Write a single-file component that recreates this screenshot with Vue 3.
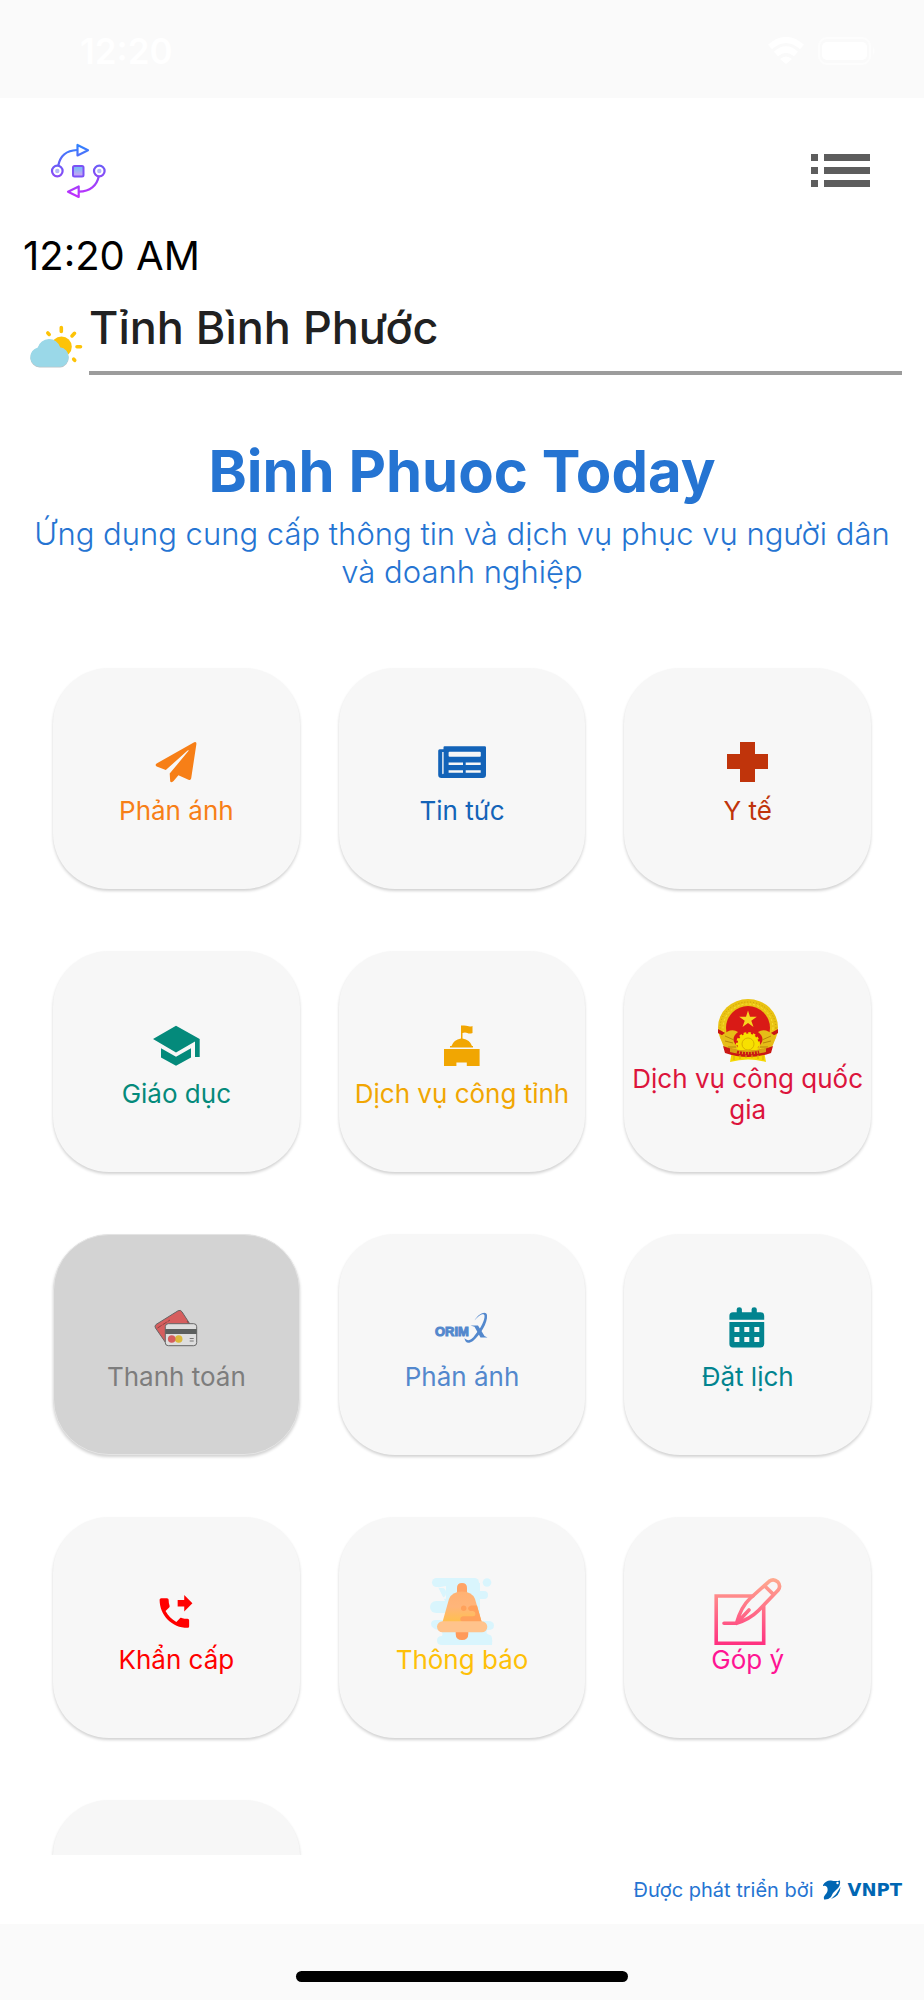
<script setup>
import { ref } from 'vue'

const province = ref('Tỉnh Bình Phước')

const services = [
  { icon: 'plane', label: 'Phản ánh', tone: 'orange' },
  { icon: 'news', label: 'Tin tức', tone: 'blue' },
  { icon: 'cross', label: 'Y tế', tone: 'rust' },
  { icon: 'school', label: 'Giáo dục', tone: 'green' },
  { icon: 'office', label: 'Dịch vụ công tỉnh', tone: 'amber' },
  { icon: 'emblem', label: 'Dịch vụ công quốc gia', tone: 'crimson' },
  { icon: 'cards', label: 'Thanh toán', tone: 'muted', disabled: true },
  { icon: 'orimx', label: 'Phản ánh', tone: 'sky' },
  { icon: 'calendar', label: 'Đặt lịch', tone: 'teal' },
  { icon: 'phone', label: 'Khẩn cấp', tone: 'red' },
  { icon: 'bell', label: 'Thông báo', tone: 'yellow' },
  { icon: 'pencil', label: 'Góp ý', tone: 'pink' },
  { icon: '', label: '', tone: 'muted' }
]
</script>

<template>
  <div class="page">
    <div class="status">
      <span class="clock">12:20</span>
      <div class="signals">
        <svg class="wifi" viewBox="0 0 36 28" aria-hidden="true">
          <path d="M2 10Q18 -4 34 10" fill="none" stroke="#fff" stroke-width="6" />
          <path d="M8 17Q18 8 28 17" fill="none" stroke="#fff" stroke-width="6" />
          <path d="M12 22Q18 17 24 22L18 27Z" fill="#fff" />
        </svg>
        <svg class="battery" viewBox="0 0 58 28" aria-hidden="true">
          <rect x="1" y="1" width="51" height="26" rx="8" fill="none" stroke="#fdfdfd" stroke-width="2" />
          <rect x="4" y="5" width="45" height="18" rx="5" fill="#fff" />
          <path d="M55 10q3 4 0 8z" fill="#fdfdfd" />
        </svg>
      </div>
    </div>

    <main class="screen">
      <header class="top">
        <svg class="logo" viewBox="0 0 56 56" aria-hidden="true">
          <defs>
            <linearGradient id="lg" gradientUnits="userSpaceOnUse" x1="0" y1="0" x2="0" y2="56">
              <stop offset="0" stop-color="#2b86ff" />
              <stop offset=".5" stop-color="#7b52f5" />
              <stop offset="1" stop-color="#c92bff" />
            </linearGradient>
            <linearGradient id="lq" x1="0" y1="0" x2="0" y2="1">
              <stop offset="0" stop-color="#6dc0f5" />
              <stop offset="1" stop-color="#d3a0f5" />
            </linearGradient>
          </defs>
          <g fill="none" stroke="url(#lg)" stroke-width="2.200" stroke-linejoin="round">
            <path d="M8.3 22.5C10 13.500 16 7.500 27 7" />
            <path d="M27.500 2v10.500L38 7.300z" />
            <path d="M48.700 33.500C47 42.500 40 48.500 29 48.700" />
            <path d="M28.700 43.500v10.500L18 48.700z" />
            <circle cx="7.300" cy="28" r="5.300" />
            <circle cx="49.300" cy="28" r="5.300" />
          </g>
          <rect x="23" y="23" width="10.500" height="10.500" rx="1.500" fill="url(#lq)" stroke="#7b52f5" stroke-width="2" />
          <circle cx="7.300" cy="28" r="2.200" fill="#b3b8f8" />
          <circle cx="49.300" cy="28" r="2.200" fill="#b3b8f8" />
        </svg>
        <button class="menu" type="button" aria-label="Menu">
          <svg viewBox="0 0 60 34" fill="#5d5d5d" aria-hidden="true">
            <path d="M0 0h7v7H0zM13 0h46v7H13zM0 13h7v7H0zM13 13h46v7H13zM0 26h7v7H0zM13 26h46v7H13z" />
          </svg>
        </button>
      </header>

      <time class="time">12:20 AM</time>

      <div class="place">
        <svg class="weather" viewBox="0 0 54 44" aria-hidden="true">
          <g stroke="#fdc307" stroke-width="3.600" stroke-linecap="round">
            <path d="M32.300 2.500v4M18.800 8l1.400 1.400M45.500 8.300l-2.500 2.600M48 21.700h3.500M44.700 34.200l1 1.100" />
          </g>
          <circle cx="32.500" cy="21.700" r="10.300" fill="#fdc307" />
          <path d="M10.500 42.600a9.800 9.800 0 0 1-1.700-19.300 11.600 11.600 0 0 1 22.300-.3 9.900 9.900 0 0 1 .2 19.600z" fill="#b9c4c8" />
          <path d="M10.500 41.800a9.800 9.800 0 0 1-1.700-19.300 11.600 11.600 0 0 1 22.300-.3 9.900 9.900 0 0 1 .2 19.600z" fill="#9ad8e8" />
        </svg>
        <input v-model="province" class="province" type="text" aria-label="Tỉnh" />
      </div>

      <h1 class="title">Binh Phuoc Today</h1>
      <p class="subtitle">Ứng dụng cung cấp thông tin và dịch vụ phục vụ người dân và doanh nghiệp</p>

      <section class="scroller">
        <div class="grid">
          <button
            v-for="(s, i) in services"
            :key="i"
            type="button"
            class="card"
            :class="[s.tone, { off: s.disabled }]"
            :disabled="s.disabled"
          >
            <svg v-if="s.icon" class="icon" viewBox="0 0 64 64" fill="currentColor" aria-hidden="true">
              <path
                v-if="s.icon === 'plane'"
                d="M50.200 11.300Q52.600 10.300 52.400 13L47.200 47.300Q46.800 49.600 44.500 48.700L34.400 44.200L29.600 50Q27.800 52 26.200 50.500L25.700 42.500L44.800 19.600Q44.500 18.800 43.600 19.500L21.800 39L12.700 35.500Q10.600 34 12.600 32.600Z"
              />
              <g v-else-if="s.icon === 'news'">
                <path
                  fill-rule="evenodd"
                  d="M14.500 15.300h40.200q1.300 0 1.300 1.300v27.100q0 3.300-3.300 3.300h-41.200q-3.300 0-3.300-3.300v-24q0-1.500 1.500-1.500h3.800v-1.600q0-1.300 1-1.300zM12.200 21v21.500q.7 1.500 1.400 0V21zM19.600 20.700q-1 0-1 1v3q0 1 1 1h30.200q1 0 1-1v-3q0-1-1-1zM18.600 31.500v2.600h14.400v-2.600zM35.700 31.500v2.600h15v-2.600zM18.600 39.200v2.600h14.400v-2.600zM35.700 39.200v2.600h15v-2.600z"
                />
              </g>
              <path v-else-if="s.icon === 'cross'" d="M24 11h15v12h13v15H39v13H24V38H11V23h13z" />
              <path
                v-else-if="s.icon === 'school'"
                d="M32 11.700L9 25l23 13.500 19-11V43h4.700V25zM17 34.300v9.200l15 8.300 15-8.300v-9.200l-15 8.500z"
              />
              <path
                v-else-if="s.icon === 'office'"
                d="M31 11.500h1.300q4-.3 5.200.6 2.500 1 5-.1v7q-3 1-5.200 0-2.500-.8-4.800.1v5.300q7.500 1.300 9.500 7.600h1v1.400H20V32h1.500q2-6.300 9.500-7.600zM14 35h35.600v17H36.800v-3.500H26.400V52H14z"
              />
              <g v-else-if="s.icon === 'emblem'">
                <path d="M16 52L14 63q18-5 36 0l-2-11z" fill="#f5d800" />
                <ellipse cx="32" cy="28.500" rx="30" ry="28.500" fill="#eac313" />
                <ellipse cx="32" cy="29" rx="28" ry="26" fill="none" stroke="#c89a0c" stroke-width="1" stroke-dasharray="1 2" />
                <ellipse cx="32" cy="29" rx="25" ry="24" fill="none" stroke="#fae43a" stroke-width="1" stroke-dasharray="2 2" />
                <ellipse cx="32" cy="29" rx="22" ry="22" fill="#d91a16" />
                <path d="M32 11.500l2 6.200h6.800l-5.500 4 2.200 6.400-5.500-4-5.500 4 2.200-6.400-5.500-4H30z" fill="#f7d720" />
                <path d="M2 30l9 5v4l-9-5zM62 30l-9 5v4l9-5z" fill="#c91613" />
                <path d="M5 37q10-9 17-4-9 7 0 15l-9 5q-8-6-8-16zM59 37q-10-9-17-4 9 7 0 15l9 5q8-6 8-16z" fill="#e6bd17" />
                <path d="M9 37l9 4M9 42l8 2M12 48l8 0M55 37l-9 4M55 42l-8 2M52 48l-8 0" stroke="#b98609" fill="none" />
                <circle cx="32" cy="45" r="10.500" fill="#f7e000" stroke="#f7e000" stroke-width="3" stroke-dasharray="2.500 2" />
                <circle cx="32" cy="45" r="6" fill="none" stroke="#d9b100" />
                <path d="M7 47q25 10 50 0l-2 7q-23 8-46 0z" fill="#ca1714" />
                <path d="M14 49q18 5 36 0v4q-18 5-36 0z" fill="#d9a012" />
                <path d="M21 53q11 3 22 0" fill="none" stroke="#ca1714" stroke-width="3" stroke-dasharray="2 1" />
                <path d="M18 57v4M24 56v4M30 56v3M36 56v3M42 56v4M47 57v4" stroke="#d8a90c" />
              </g>
              <g v-else-if="s.icon === 'cards'" stroke-linejoin="round">
                <path d="M12 27.500L34 13.800q2.500-1.300 4 1L46.500 28 21.500 45.500 11.500 31q-1.300-2 .5-3.500z" fill="#d65e5e" stroke="#666" stroke-width="1" />
                <path d="M13.500 31l12.500-8M43 24l2 3" fill="none" stroke="#8c4444" stroke-width="1" stroke-dasharray="5 1" />
                <rect x="21.300" y="26.700" width="31.400" height="22" rx="3" fill="#dedede" stroke="#666" stroke-width="1" />
                <path d="M21.300 32h31.400v5H21.300z" fill="#5c5f5e" />
                <circle cx="34.700" cy="42" r="3.800" fill="#dbb93a" />
                <circle cx="27.700" cy="42" r="3.800" fill="#d65e5e" />
                <path d="M45.700 41.500h4M45.700 44h4" stroke="#777" stroke-width="1" />
              </g>
              <g v-else-if="s.icon === 'orimx'">
                <text class="orim" x="5" y="39">ORIM</text>
                <path d="M44.500 23.500C49 16 56 13.500 57 18C58 26 50 38 43 44C38 47.500 35 45.500 34.500 41C38 45 41.500 43 45 38C51 31 55 23 54.500 18.500C53.500 15.500 48.500 18.500 44.500 23.500Z" />
                <path d="M40.500 28.500h7.500l6.500 10.500 3 1.500h-7L44.500 29.800z" />
              </g>
              <path
                v-else-if="s.icon === 'calendar'"
                fill-rule="evenodd"
                d="M13.400 22.700v-4q0-3.500 3.500-3.500h3.800v-3q0-2 2.600-2t2.600 2v3h9.700v-3q0-2 2.600-2t2.600 2v3h3.900q3.500 0 3.500 3.500v4zM13.400 25h34.800v22q0 3.400-3.500 3.400H16.900q-3.500 0-3.500-3.400zM18.400 30v5h5v-5zM28.300 30v5h5v-5zM38.300 30v5h5v-5zM18.400 40v5h5v-5zM28.300 40v5h5v-5zM38.300 40v5h5v-5z"
              />
              <path
                v-else-if="s.icon === 'phone'"
                transform="translate(10.700 13.400) scale(1.640)"
                d="M18 11l5-5-5-5v3h-4v4h4v3zm2 4.500c-1.250 0-2.450-.2-3.570-.57-.35-.11-.74-.03-1.020.24l-2.200 2.200c-2.830-1.440-5.150-3.750-6.590-6.590l2.200-2.210c.28-.26.36-.65.25-1C8.700 6.450 8.500 5.250 8.500 4c0-.55-.45-1-1-1H4c-.55 0-1 .45-1 1 0 9.390 7.610 17 17 17 .55 0 1-.45 1-1v-3.500c0-.55-.45-1-1-1z"
              />
              <g v-else-if="s.icon === 'bell'" transform="translate(0 1)">
                <defs>
                  <linearGradient id="bb" x1="0" y1="0" x2="0" y2="1">
                    <stop offset="0" stop-color="#ffb273" />
                    <stop offset=".5" stop-color="#ffb57a" />
                    <stop offset="1" stop-color="#ffc04d" />
                  </linearGradient>
                </defs>
                <g fill="#d9f5fd">
                  <rect x="2" y="-3" width="47" height="9" rx="4.500" />
                  <path d="M6 2h44v8h4q4 0 4 4t-4 4h-4v22h8q6 0 6 4.500t-6 4.500h-1q-2 4 3 5 3 1 2 10H12q-5 0-5-4.500T12 55q2-4-4-6-7-2-7-6t5-4h10v-17z" />
                  <rect x="0" y="20" width="22" height="12" rx="6" />
                  <circle cx="57" cy="1.500" r="4.300" />
                </g>
                <path d="M5 7h7q4 0 4 4.500T12 17q4 2 4 0V5z" fill="#f7f7f7" />
                <path d="M25.700 48h12.600v5q0 6-6.300 6t-6.300-6z" fill="#ff9a5a" />
                <path d="M27 14V7q0-5 5-5t5 5v7z" fill="#ffa466" />
                <path d="M12.500 41L19 18q3-7.500 13-7.500T45 18l6.700 23z" fill="url(#bb)" />
                <path d="M41 24.500h6L51.700 41H32.500q-2.500-1-2.300-3t2.500-2.700H43q2.500 0 2.500-2.300T43 30h-3q-2-1-2-2.700t3-2.800z" fill="#ffa15b" />
                <circle cx="33.700" cy="27.300" r="2.700" fill="#ffa15b" />
                <rect x="7" y="40.300" width="50.300" height="11" rx="5.500" fill="#ffc38c" />
              </g>
              <g
                v-else
                transform="translate(0 1)"
                fill="none"
                stroke="url(#pg)"
                stroke-width="3.600"
                stroke-linecap="round"
                stroke-linejoin="round"
              >
                <defs>
                  <linearGradient id="pg" gradientUnits="userSpaceOnUse" x1="0" y1="-3" x2="0" y2="64">
                    <stop offset="0" stop-color="#ffab8f" />
                    <stop offset="1" stop-color="#ff2f80" />
                  </linearGradient>
                </defs>
                <path stroke-linejoin="miter" d="M37 15H.2v47.200h47.500V25.500" />
                <path d="M8 42.300h12.500C23 33 27 24 34 17.500L53.200.300Q57.500-3 61.800.800Q65.300 5 62 9.300L42.500 29.500C36 36 29.500 39.500 20.500 42.300L33 29M49.300 5.500l7.800 7.600" />
              </g>
            </svg>
            <span v-if="s.label" class="label">{{ s.label }}</span>
          </button>
        </div>
      </section>

      <footer class="credit">
        <span>Được phát triển bởi</span>
        <svg class="globe" viewBox="0 0 20 20" fill="#0066b3" aria-hidden="true">
          <path d="M1 5Q4 0 9 .5Q14 1.500 18 .5Q19 6 14 10Q10 13 9 17Q6 20 2 19.500Q1 17 3 15Q7 11 5 7Q3 5 1 6Z" />
          <path d="M18.500 7Q18 16 9 19Q15 14 18.500 7Z" />
          <circle cx="15.500" cy="3" r="1.200" fill="#fff" />
        </svg>
        <b class="vnpt">VNPT</b>
      </footer>
    </main>

    <div class="bottom"><div class="home"></div></div>
  </div>
</template>

<style>
body {
  background: #fff;
}
</style>

<style scoped>
.page {
  display: flex;
  flex-direction: column;
  height: 100vh;
  font-family: Inter, "Noto Sans", sans-serif;
  background: #fff;
}

.page * {
  box-sizing: border-box;
}

.status {
  flex: none;
  height: 98px;
  padding: 4px 48px 0 80px;
  display: flex;
  align-items: center;
  justify-content: space-between;
  background: #fafafa;
}

.clock {
  font-size: 35px;
  line-height: 40px;
  font-weight: 600;
  color: #fff;
}

.signals {
  display: flex;
  gap: 14px;
}

.wifi {
  width: 36px;
  height: 28px;
}

.battery {
  width: 58px;
  height: 28px;
}

.screen {
  flex: 1;
  min-height: 0;
  display: flex;
  flex-direction: column;
}

.top {
  flex: none;
  display: flex;
  align-items: center;
  justify-content: space-between;
  padding: 45px 53px 0 50px;
}

.logo {
  width: 56px;
  height: 56px;
}

.menu {
  display: flex;
  padding: 0;
  border: 0;
  background: none;
}

.menu svg {
  width: 60px;
  height: 34px;
}

.time {
  flex: none;
  margin-top: 33px;
  padding-left: 23px;
  font-size: 40px;
  line-height: 48px;
  color: #000;
}

.place {
  flex: none;
  display: flex;
  align-items: flex-end;
  gap: 6px;
  margin-top: 16px;
  padding: 0 22px 0 29px;
}

.weather {
  flex: none;
  width: 54px;
  height: 44px;
  margin-bottom: 6px;
}

.province {
  flex: 1;
  min-width: 0;
  height: 79px;
  padding: 0 0 12px;
  border: 0;
  border-bottom: 4px solid #9c9c9c;
  border-radius: 0;
  outline: 0;
  background: none;
  font-family: inherit;
  font-size: 45px;
  font-weight: 500;
  color: #212121;
}

.title {
  flex: none;
  margin: 62px 0 0;
  text-align: center;
  font-size: 58px;
  line-height: 68px;
  font-weight: 700;
  color: #2574d2;
}

.subtitle {
  flex: none;
  margin: 10px 0 0;
  padding: 0 24px;
  text-align: center;
  font-size: 31px;
  line-height: 38px;
  font-weight: 300;
  color: #2574d2;
}

.scroller {
  flex: 1;
  min-height: 0;
  margin-top: 41px;
  padding: 36px 53px 0;
  overflow: hidden;
}

.grid {
  display: grid;
  grid-template-columns: repeat(3, minmax(0, 1fr));
  grid-auto-rows: 221px;
  gap: 62px 39px;
}

.card {
  display: flex;
  flex-direction: column;
  align-items: center;
  justify-content: center;
  padding: 0;
  border: 0;
  border-radius: 56px;
  background: #f7f7f7;
  box-shadow: 0 2px 3px rgba(0, 0, 0, 0.18);
  font-family: inherit;
}

.card.off {
  background: #d3d3d3;
  border: 1px solid #e4e4e4;
}

.icon {
  flex: none;
  width: 64px;
  height: 64px;
  overflow: visible;
}

.label {
  font-size: 26px;
  line-height: 31px;
  text-align: center;
}

.orim {
  font: bold 13px "Liberation Sans", sans-serif;
  stroke: currentColor;
  stroke-width: 1px;
}

.orange { color: #f77f17; }
.blue { color: #1363b8; }
.rust { color: #c0340b; }
.green { color: #048a7b; }
.amber { color: #f1a602; }
.crimson { color: #dc143c; }
.muted { color: #7d7d7d; }
.sky { color: #5388cd; }
.teal { color: #02848f; }
.red { color: #f00; }
.yellow { color: #fec008; }
.pink { color: #ff1493; }

.credit {
  flex: none;
  height: 69px;
  display: flex;
  align-items: center;
  justify-content: flex-end;
  padding: 0 22px 0 0;
  font-size: 20px;
  line-height: 24px;
  color: #2574d2;
}

.globe {
  width: 20px;
  height: 20px;
  margin: 0 6px 0 8px;
}

.vnpt {
  font-family: "DejaVu Sans", sans-serif;
  font-size: 18px;
  line-height: 24px;
  color: #0066b3;
}

.bottom {
  flex: none;
  height: 76px;
  display: flex;
  justify-content: center;
  align-items: flex-end;
  padding-bottom: 18px;
  background: #fafafa;
}

.home {
  width: 36%;
  height: 11px;
  border-radius: 6px;
  background: #000;
}
</style>
